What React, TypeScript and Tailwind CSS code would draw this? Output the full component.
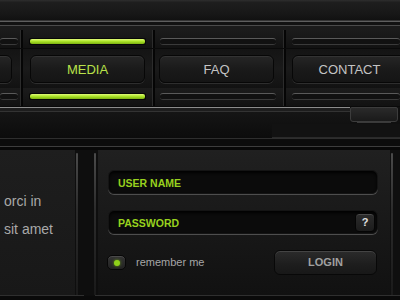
import React from "react";

function Sep() {
  return <div className="w-[3px] shrink-0 bg-[#050505] border-l border-[#2c2c2c]" />;
}

function GreenBar() {
  return (
    <div className="h-[7px] rounded-[2px] bg-[#070707] p-px">
      <div className="h-full rounded-[2px] bg-[linear-gradient(#e2fb7c,#aee62a_45%,#7cb011)]" />
    </div>
  );
}

function GrayTrack() {
  return (
    <div className="h-[7px] rounded-[3px] bg-[#111] border-t border-[#5a5a5a] border-b border-b-[#3a3a3a]" />
  );
}

function Strip({ top }: { top: number }) {
  const pad = top === 8 ? "pt-[8px]" : "pt-[5px]";
  return (
    <div className="h-[18px] shrink-0 flex bg-[linear-gradient(#1c1c1c,#121212)]">
      <div className={`w-[20px] shrink-0 ${pad} pr-[2px]`}>
        <GrayTrack />
      </div>
      <Sep />
      <div className={`w-[129px] shrink-0 ${pad} pl-[6px] pr-[6px]`}>
        <GreenBar />
      </div>
      <Sep />
      <div className={`w-[128px] shrink-0 ${pad} pl-[5px] pr-[7px]`}>
        <GrayTrack />
      </div>
      <Sep />
      <div className={`flex-1 ${pad} pl-[6px]`}>
        <GrayTrack />
      </div>
    </div>
  );
}

function NavBtn({ label, active, className }: { label: string; active?: boolean; className: string }) {
  return (
    <div
      className={`h-[28px] shrink-0 rounded-[6px] border border-[#070707] bg-[linear-gradient(#262626,#1a1a1a_50%,#151515)] shadow-[inset_0_1px_0_#333,0_1px_0_#2e2e2e] flex items-center justify-center pt-[2px] text-[13px] ${
        active ? "text-[#b9e24a]" : "text-[#c4c4c4]"
      } ${className}`}
    >
      {label}
    </div>
  );
}

export default function App() {
  return (
    <div className="w-[400px] h-[300px] overflow-hidden bg-[#0d0d0d] flex flex-col font-['Liberation_Sans',Arial,sans-serif]">
      {/* top bar */}
      <div className="h-[20px] shrink-0 bg-[linear-gradient(#2e2e2e,#1e1e1e_12%,#171717_70%,#111)]" />
      <div className="h-px shrink-0 bg-[#333]" />
      <div className="h-px shrink-0 bg-[#5e5e5e]" />
      <div className="h-[3px] shrink-0 bg-[#121212]" />
      <div className="h-px shrink-0 bg-[#4a4a4a]" />
      <div className="h-[4px] shrink-0 bg-[#1b1b1b]" />

      <Strip top={8} />

      {/* nav row */}
      <div className="h-[40px] shrink-0 flex bg-[linear-gradient(#141414,#1a1a1a_50%,#121212)] border-t border-[#0a0a0a]">
        <div className="w-[20px] shrink-0 pt-[6px] overflow-hidden">
          <NavBtn label="" className="w-[30px] -ml-[18px]" />
        </div>
        <Sep />
        <div className="w-[129px] shrink-0 pt-[6px] pl-[7px]">
          <NavBtn label="MEDIA" active className="w-[115px]" />
        </div>
        <Sep />
        <div className="w-[128px] shrink-0 pt-[6px] pl-[4px]">
          <NavBtn label="FAQ" className="w-[115px]" />
        </div>
        <Sep />
        <div className="flex-1 pt-[6px] pl-[6px] overflow-hidden">
          <NavBtn label="CONTACT" className="w-[115px]" />
        </div>
      </div>

      <Strip top={5} />

      <div className="h-px shrink-0 bg-[#0a0a0a]" />
      {/* line + tab band */}
      <div className="h-[17px] shrink-0 flex">
        <div className="flex-1 flex flex-col">
          <div className="h-px bg-[#8c8c8c]" />
          <div className="h-[3px] bg-[#1d1d1d]" />
          <div className="h-px bg-[#333]" />
          <div className="flex-1 bg-[linear-gradient(#151515,#111)]" />
        </div>
        <div className="w-[48px] shrink-0 flex flex-col bg-[#101010]">
          <div className="h-[15px] rounded-b-[3px] rounded-t-[2px] border border-[#3c3c3c] bg-[linear-gradient(#2a2a2a,#1a1a1a)]" />
          <div className="mx-[7px] h-px bg-[#3a3a3a]" />
        </div>
        <div className="w-[2px] shrink-0 bg-[#101010]" />
      </div>
      <div className="h-[14px] shrink-0 flex bg-[#121212]">
        <div className="w-[272px] bg-[linear-gradient(#111,#0c0c0c)]" />
        <div className="flex-1 flex flex-col justify-end">
          <div className="h-px bg-[#2a2a2a]" />
        </div>
      </div>
      <div className="h-px shrink-0 bg-[#2e2e2e]" />
      <div className="h-[7px] shrink-0 bg-[#0c0c0c]" />
      <div className="h-px shrink-0 bg-[#3d3d3d]" />
      <div className="h-[3px] shrink-0 bg-[#080808]" />

      {/* content */}
      <div className="h-[145px] shrink-0 flex">
        <div className="w-[75px] shrink-0 bg-[linear-gradient(#1e1e1e,#181818)] pt-[37px] text-[14px] leading-[28px] text-[#a9a9a9] overflow-hidden whitespace-nowrap">
          <div className="pl-[4px]">orci in</div>
          <div className="pl-[4px]">sit amet</div>
        </div>
        <div className="w-[23px] shrink-0 flex bg-[#0e0e0e] pt-[3px]">
          <div className="ml-px w-[2px] rounded-t-[1px] bg-[linear-gradient(#4a4a4a,#2c2c2c_40%,#1a1a1a)]" />
          <div className="flex-1" />
          <div className="mr-px w-[2px] rounded-t-[1px] bg-[linear-gradient(#4a4a4a,#2c2c2c_40%,#1a1a1a)]" />
          <div className="w-px" />
        </div>
        <div className="w-[292px] shrink-0 bg-[linear-gradient(#202020,#1a1a1a_40%,#111)] pl-[10px] pr-[12px] pt-[20px] flex flex-col">
          <div className="h-[24px] rounded-[6px] bg-[#0b0b0b] border border-[#141414] shadow-[inset_0_2px_3px_rgba(0,0,0,0.9),0_1px_0_#4e4e4e] flex items-center pl-[9px] pt-[3px] text-[10.5px] font-bold text-[#98d21e]">
            USER NAME
          </div>
          <div className="mt-[16px] h-[24px] rounded-[6px] bg-[#0b0b0b] border border-[#141414] shadow-[inset_0_2px_3px_rgba(0,0,0,0.9),0_1px_0_#4e4e4e] flex items-center pl-[9px] pr-[2px] text-[10.5px] font-bold text-[#98d21e]">
            <span className="pt-[4px]">PASSWORD</span>
            <div className="ml-auto w-[20px] h-[19px] rounded-[4px] bg-[linear-gradient(#2c2c2c,#1c1c1c)] border border-[#050505] shadow-[inset_0_1px_0_#4a4a4a] flex items-center justify-center text-[11px] font-bold text-[#e0e0e0]">
              ?
            </div>
          </div>
          <div className="mt-[16px] h-[25px] flex items-center">
            <div className="-ml-[1px] w-[19px] h-[15px] rounded-[5px] bg-[linear-gradient(#343434,#222)] border border-[#070707] shadow-[inset_0_1px_0_#4a4a4a] flex items-center justify-center">
              <div className="w-[6px] h-[6px] rounded-full bg-[#8fd11a] shadow-[0_0_3px_#6fa80f]" />
            </div>
            <span className="ml-[10px] text-[11px] text-[#a6a6a6]">remember me</span>
            <div className="ml-auto mr-px w-[103px] h-[25px] rounded-[6px] bg-[linear-gradient(#2b2b2b,#1d1d1d_60%,#181818)] border border-[#080808] shadow-[inset_0_1px_0_#444] flex items-center justify-center text-[11px] font-bold text-[#a0a0a0]">
              LOGIN
            </div>
          </div>
        </div>
        <div className="flex-1 flex bg-[#0f0f0f] pt-[3px]">
          <div className="ml-px w-[2px] rounded-t-[1px] bg-[linear-gradient(#4a4a4a,#2c2c2c_40%,#1a1a1a)]" />
        </div>
      </div>
      <div className="h-px shrink-0 flex">
        <div className="w-[84px] bg-[#2f2f2f]" />
        <div className="w-[11px] bg-[#0d0d0d]" />
        <div className="flex-1 bg-[#2f2f2f]" />
      </div>
      <div className="flex-1 bg-[#0a0a0a]" />
    </div>
  );
}
